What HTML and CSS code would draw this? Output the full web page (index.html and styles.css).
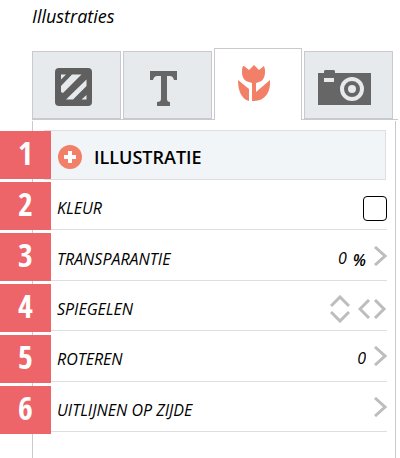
FILE: index.html
```html
<!DOCTYPE html>
<html lang="nl">
<head>
    <meta charset="UTF-8">
    <meta name="viewport" content="width=device-width, initial-scale=1.0">
    <title>Illustraties</title>
    <link rel="stylesheet" href="styles.css">
</head>
<body>
    <h1 class="page-title">Illustraties</h1>

    <!-- Tabs -->
    <div class="tabs" role="tablist">
        <button class="tab" type="button" role="tab" aria-selected="false" aria-label="Achtergrond">
            <svg class="tab-icon" viewBox="0 0 56 40">
                <rect x="11" y="1" width="37" height="38" rx="4" fill="#5f5f5f"/>
                <path d="M17 7.500h5l-5 5zM28 7.500h9.500L19 26l-2-1v-6zM42.500 12.500v6.500L29 32.500h-7zM42.500 28v4.500h-5z" fill="#e6eaed"/>
            </svg>
        </button>
        <button class="tab" type="button" role="tab" aria-selected="false" aria-label="Tekst">
            <svg class="tab-icon" viewBox="0 0 56 40">
                <path d="M15 4h27v9h-3q-1-4-4-4h-3v23q0 3 3 3v4H22v-4q4 0 4-3V9h-4q-3 0-4 4h-3z" fill="#666"/>
            </svg>
        </button>
        <button class="tab active" type="button" role="tab" aria-selected="true" aria-label="Illustratie">
            <svg class="tab-icon" viewBox="0 0 56 40">
                <path d="M18 1l5 4 5-5 5 5 5-4q1 2 1 6c0 5-2 9-6 10l-3 1v9l14-12c1 12-5 21-16 21h-2V18l-3-1c-5-1-7-5-7-10q0-4 1-6z" fill="#f27f67"/>
                <path d="M12 15l11 9v12C15 34 12 25 12 15z" fill="#f27f67"/>
            </svg>
        </button>
        <button class="tab" type="button" role="tab" aria-selected="false" aria-label="Foto">
            <svg class="tab-icon" viewBox="0 0 56 40">
                <path d="M1 6h6V4l1-1h9l1 1v2h36v32H1z" fill="#666"/>
                <path d="M7 11h10v4H7z" fill="#e6eaed"/>
                <circle cx="35" cy="22" r="10" fill="none" stroke="#e6eaed" stroke-width="4"/>
                <circle cx="35" cy="22" r="4" fill="#e6eaed"/>
            </svg>
        </button>
    </div>

    <div class="panel">
        <!-- Numbered markers over the left edge -->
        <ol class="markers">
            <li>1</li>
            <li>2</li>
            <li>3</li>
            <li>4</li>
            <li>5</li>
            <li>6</li>
        </ol>

        <button class="panel-header" type="button">
            <svg class="plus-icon" viewBox="0 0 24 24">
                <circle cx="12" cy="12" r="12" fill="#f27f67"/>
                <path d="M12 6v12M6 12h12" stroke="#fff" stroke-width="4"/>
            </svg>
            Illustratie
        </button>

        <div class="options">
            <div class="option">
                <span class="option-label" id="kleur">Kleur</span>
                <button class="swatch" type="button" aria-labelledby="kleur"></button>
            </div>
            <div class="option">
                <label class="option-label" for="transparantie">Transparantie</label>
                <input class="value" id="transparantie" type="text" value="0">
                <span class="unit">%</span>
                <button class="arrow" type="button" aria-label="Transparantie aanpassen">
                    <svg width="13" height="20" viewBox="0 0 13 20"><path d="M1 1l10 9-10 9"/></svg>
                </button>
            </div>
            <div class="option">
                <span class="option-label">Spiegelen</span>
                <button class="arrow flip" type="button" aria-label="Verticaal spiegelen">
                    <svg width="20" height="28" viewBox="0 0 20 28"><path d="M1 11l9-9 9 9M1 17l9 9 9-9"/></svg>
                </button>
                <button class="arrow flip" type="button" aria-label="Horizontaal spiegelen">
                    <svg width="29" height="20" viewBox="0 0 29 20"><path d="M11 1L2 10l9 9M17 1l9 9-9 9"/></svg>
                </button>
            </div>
            <div class="option">
                <label class="option-label" for="roteren">Roteren</label>
                <input class="value" id="roteren" type="text" value="0">
                <button class="arrow" type="button" aria-label="Roteren aanpassen">
                    <svg width="13" height="20" viewBox="0 0 13 20"><path d="M1 1l10 9-10 9"/></svg>
                </button>
            </div>
            <div class="option">
                <span class="option-label">Uitlijnen op zijde</span>
                <button class="arrow" type="button" aria-label="Uitlijnen op zijde">
                    <svg width="13" height="20" viewBox="0 0 13 20"><path d="M1 1l10 9-10 9"/></svg>
                </button>
            </div>
        </div>
    </div>
</body>
</html>
```
FILE: styles.css
```css
* {
    box-sizing: border-box;
}

body {
    margin: 0;
    min-height: 100vh;
    display: flex;
    flex-direction: column;
    font-family: 'Open Sans', sans-serif;
    font-size: 16px;
    color: #000;
    background-color: #fff;
}

button,
input {
    margin: 0;
    padding: 0;
    border: none;
    background: none;
    font: inherit;
    color: inherit;
}

button {
    cursor: pointer;
}

svg {
    display: block;
}

.page-title {
    margin: 4px 0 23px 32px;
    font-size: 18px;
    line-height: 24px;
    font-weight: 400;
    font-style: italic;
}

.tabs {
    display: grid;
    grid-template-columns: repeat(4, 1fr);
    gap: 2px;
    margin: 0 2px 1px 32px;
    padding-right: 5px;
    border-bottom: 1px solid #c9c9cf;
}

.tab {
    display: flex;
    align-items: center;
    justify-content: center;
    height: 68px;
    padding: 4px 8px 0 0;
    border: 1px solid #c9c9cf;
    background-color: #e6eaed;
}

.tab.active {
    height: 72px;
    margin: -3px 0 -1px;
    padding-top: 0;
    border-bottom: none;
    background-color: #fff;
}

.tab-icon {
    width: 56px;
    height: 40px;
}

.panel {
    position: relative;
    flex: 1;
    margin: 0 4px 0 32px;
    padding: 9px 8px 20px 11px;
    border: 1px solid #c9c9cf;
    border-width: 0 1px;
}

/* Markers */
.markers {
    position: absolute;
    top: 10px;
    left: -33px;
    display: grid;
    gap: 3px;
    margin: 0;
    padding: 0;
    list-style: none;
}

.markers li {
    width: 51px;
    height: 48px;
    background-color: #ed6569;
    color: #fff;
    font-family: 'Open Sans Condensed', 'Roboto Condensed', Roboto, sans-serif;
    font-size: 32px;
    line-height: 44px;
    font-weight: 700;
    text-align: center;
}

.panel-header {
    display: flex;
    align-items: center;
    gap: 12px;
    width: calc(100% - 1px);
    height: 50px;
    padding: 3px 0 0 13px;
    border: 1px solid #dedede;
    background-color: #f1f5f7;
    font-size: 18px;
    font-weight: 600;
    text-transform: uppercase;
}

.plus-icon {
    width: 24px;
    height: 24px;
}

/* Options */
.options {
    display: grid;
    grid-template-rows: repeat(5, 1fr);
    min-height: 252px;
}

.option {
    display: flex;
    align-items: center;
    padding-left: 13px;
    border-bottom: 1px solid #dedede;
}

.option-label {
    flex: 1;
    padding-top: 7px;
    font-style: italic;
    text-transform: uppercase;
}

.value {
    width: 32px;
    padding-top: 5px;
    font-style: italic;
    text-align: right;
}

.unit {
    padding: 10px 0 0 6px;
    font-style: italic;
    font-weight: 600;
}

.swatch {
    width: 24px;
    height: 25px;
    margin-top: 7px;
    border: 1px solid #000;
    border-radius: 4px;
    background-color: #fff;
}

.arrow {
    padding-top: 1px;
    margin-left: 8px;
}

.arrow svg {
    fill: none;
    stroke: #bdbdbd;
    stroke-width: 3px;
}

.flip {
    padding-top: 7px;
}
```
